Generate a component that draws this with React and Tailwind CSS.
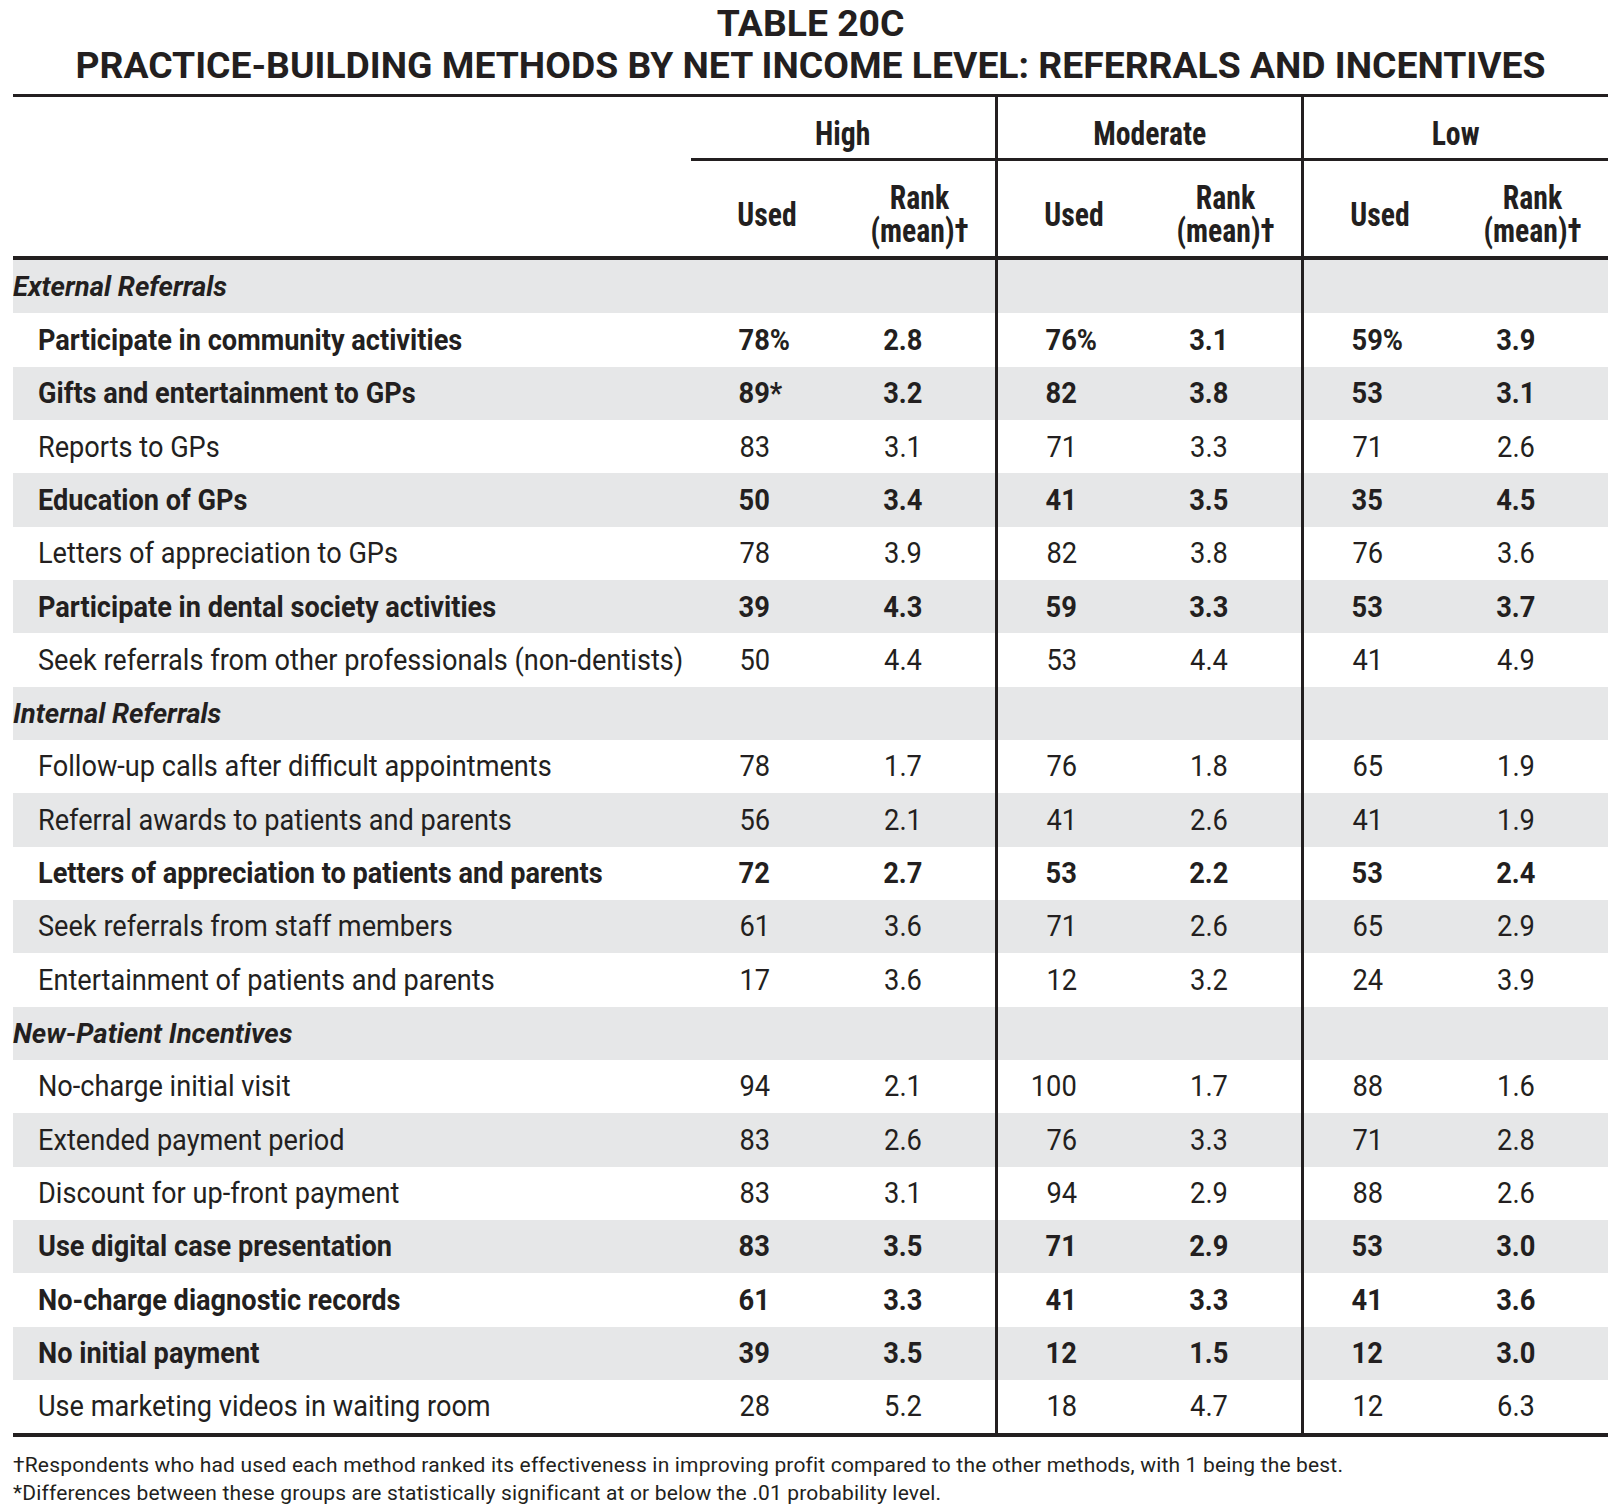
import React from "react";

// Practice-building methods, grouped by section. b = bold row
const SECTIONS = [
  {
    title: "External Referrals",
    rows: [
      { label: "Participate in community activities", b: true, vals: [["78", "%"], "2.8", ["76", "%"], "3.1", ["59", "%"], "3.9"] },
      { label: "Gifts and entertainment to GPs", b: true, vals: [["89", "*"], "3.2", "82", "3.8", "53", "3.1"] },
      { label: "Reports to GPs", vals: ["83", "3.1", "71", "3.3", "71", "2.6"] },
      { label: "Education of GPs", b: true, vals: ["50", "3.4", "41", "3.5", "35", "4.5"] },
      { label: "Letters of appreciation to GPs", vals: ["78", "3.9", "82", "3.8", "76", "3.6"] },
      { label: "Participate in dental society activities", b: true, vals: ["39", "4.3", "59", "3.3", "53", "3.7"] },
      { label: "Seek referrals from other professionals (non-dentists)", vals: ["50", "4.4", "53", "4.4", "41", "4.9"] },
    ],
  },
  {
    title: "Internal Referrals",
    rows: [
      { label: "Follow-up calls after difficult appointments", vals: ["78", "1.7", "76", "1.8", "65", "1.9"] },
      { label: "Referral awards to patients and parents", vals: ["56", "2.1", "41", "2.6", "41", "1.9"] },
      { label: "Letters of appreciation to patients and parents", b: true, vals: ["72", "2.7", "53", "2.2", "53", "2.4"] },
      { label: "Seek referrals from staff members", vals: ["61", "3.6", "71", "2.6", "65", "2.9"] },
      { label: "Entertainment of patients and parents", vals: ["17", "3.6", "12", "3.2", "24", "3.9"] },
    ],
  },
  {
    title: "New-Patient Incentives",
    rows: [
      { label: "No-charge initial visit", vals: ["94", "2.1", "100", "1.7", "88", "1.6"] },
      { label: "Extended payment period", vals: ["83", "2.6", "76", "3.3", "71", "2.8"] },
      { label: "Discount for up-front payment", vals: ["83", "3.1", "94", "2.9", "88", "2.6"] },
      { label: "Use digital case presentation", b: true, vals: ["83", "3.5", "71", "2.9", "53", "3.0"] },
      { label: "No-charge diagnostic records", b: true, vals: ["61", "3.3", "41", "3.3", "41", "3.6"] },
      { label: "No initial payment", b: true, vals: ["39", "3.5", "12", "1.5", "12", "3.0"] },
      { label: "Use marketing videos in waiting room", vals: ["28", "5.2", "18", "4.7", "12", "6.3"] },
    ],
  },
];

const GROUPS = ["High", "Moderate", "Low"];
const groupCls = [
  "w-[304px]",
  "w-[306px] border-l-[3px] border-[#231f20]",
  "w-[307px] border-l-[3px] border-[#231f20]",
];

const cond = "font-['Roboto_Condensed',Roboto,sans-serif] font-bold [font-stretch:75%]";

function Num({ v }) {
  if (Array.isArray(v)) {
    return (
      <span className="inline-block whitespace-nowrap scale-x-[0.925] origin-right">
        {v[0]}
        <span className="inline-block w-0">{v[1]}</span>
      </span>
    );
  }
  return <span className="inline-block scale-x-[0.925] origin-right">{v}</span>;
}

function Row({ row, shaded }) {
  return (
    <div className={`flex h-[53.33px] ${shaded ? "bg-[#e6e7e8]" : "bg-white"} ${row.b ? "font-bold" : "font-normal"}`}>
      <div className="w-[678px] flex items-center pl-[25px] whitespace-nowrap">
        <span className="inline-block scale-x-[0.92] origin-left">{row.label}</span>
      </div>
      {GROUPS.map((g, gi) => (
        <div key={g} className={`flex items-center ${groupCls[gi]}`}>
          <div className="w-[152px] text-right pr-[73px]">
            <Num v={row.vals[gi * 2]} />
          </div>
          <div className="flex-1 text-right pr-[73px]">
            <Num v={row.vals[gi * 2 + 1]} />
          </div>
        </div>
      ))}
    </div>
  );
}

function SectionRow({ title }) {
  return (
    <div className="flex h-[53.33px] bg-[#e6e7e8]">
      <div className="w-[678px] flex items-center text-[27.5px] font-bold italic">{title}</div>
      {GROUPS.map((g, gi) => (
        <div key={g} className={groupCls[gi]} />
      ))}
    </div>
  );
}

export default function App() {
  let idx = 0;
  const body = [];
  SECTIONS.forEach((s) => {
    body.push(<SectionRow key={s.title} title={s.title} />);
    idx++;
    s.rows.forEach((r) => {
      body.push(<Row key={r.label} row={r} shaded={idx % 2 === 0} />);
      idx++;
    });
  });

  return (
    <div className="w-[1617px] h-[1509px] bg-white text-[#231f20] font-['Roboto',sans-serif]">
      <div className="ml-[13px] w-[1595px]">
        {/* title */}
        <div className="pt-[2px] text-center text-[37.3px] leading-[42px] font-bold">
          <div>TABLE 20C</div>
          <div className="whitespace-nowrap">PRACTICE-BUILDING METHODS BY NET INCOME LEVEL: REFERRALS AND INCENTIVES</div>
        </div>

        {/* table */}
        <div className="mt-[8px] border-t-[3px] border-b-4 border-[#231f20] text-[29.5px]">
          {/* group header */}
          <div className={`flex ${cond} text-[33px] leading-[33px]`}>
            <div className="w-[678px]" />
            {GROUPS.map((g, gi) => (
              <div key={g} className={`${groupCls[gi]}`}>
                <div className="h-[64px] pt-[20px] text-center border-b-[3px] border-[#231f20]">
                  <span className="inline-block scale-x-[0.9]">{g}</span>
                </div>
                <div className="flex items-center h-[95px] pt-[11px]">
                  <div className="w-[152px] text-center">
                    <span className="inline-block scale-x-[0.9]">Used</span>
                  </div>
                  <div className="flex-1 text-center">
                    <span className="inline-block scale-x-[0.9]">
                      Rank
                      <br />
                      (mean)†
                    </span>
                  </div>
                </div>
              </div>
            ))}
          </div>
          <div className="flex h-[4px] bg-[#231f20]" />
          {body}
        </div>

        {/* footnotes */}
        <div className="mt-[15px] text-[21px] leading-[27.6px] tracking-[0.17px]">
          <div>†Respondents who had used each method ranked its effectiveness in improving profit compared to the other methods, with 1 being the best.</div>
          <div>*Differences between these groups are statistically significant at or below the .01 probability level.</div>
        </div>
      </div>
    </div>
  );
}
